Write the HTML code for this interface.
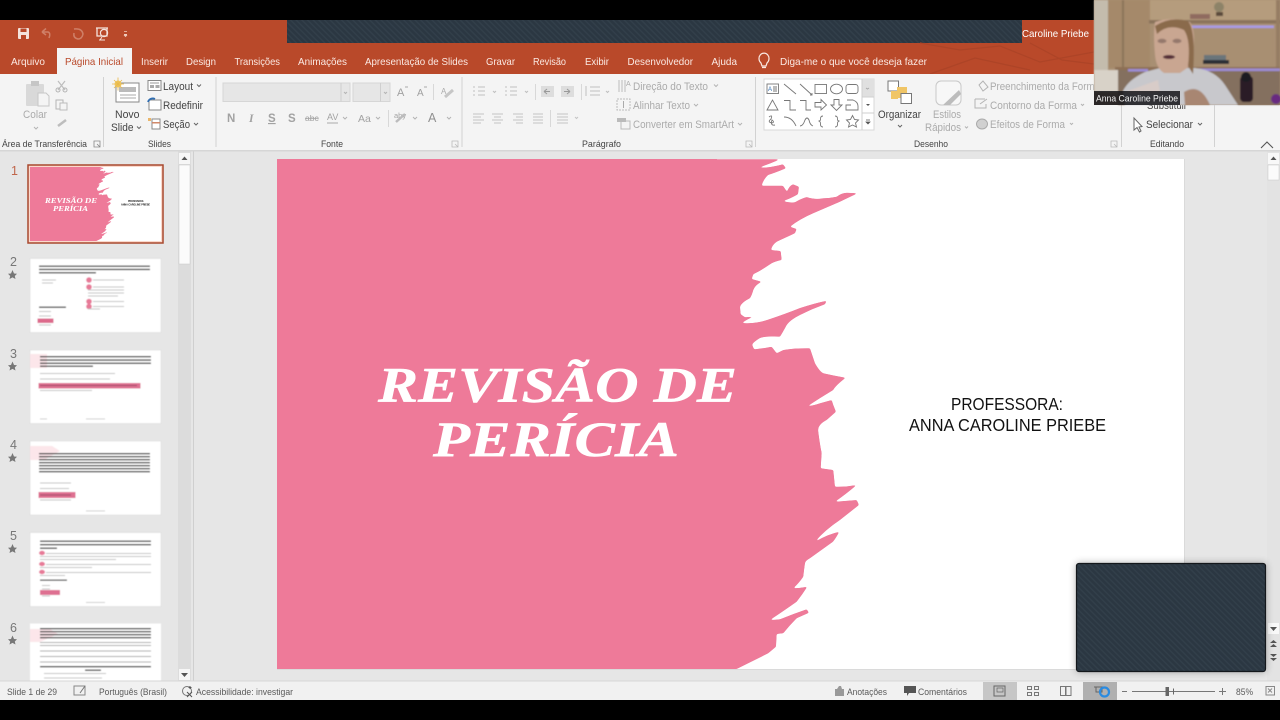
<!DOCTYPE html>
<html><head><meta charset="utf-8"><title>PowerPoint</title>
<style>
html,body{margin:0;padding:0;background:#000;width:1280px;height:720px;overflow:hidden}
svg{display:block;filter:blur(.3px)}
text{font-family:"Liberation Sans",sans-serif}
.t{font-size:10.5px;fill:#fbe9e3}
.b{font-size:10.5px;fill:#444}
.g{font-size:10.5px;fill:#ababab}
.l{font-size:9.5px;fill:#444}
.s{font-size:9.5px;fill:#5a5a5a}
.ic{fill:none;stroke:#666;stroke-width:1}
.id{fill:none;stroke:#b4b4b4;stroke-width:1}
.bar{fill:#333}
.gb{fill:#c4c4c4}
</style></head><body>
<svg width="1280" height="720" viewBox="0 0 1280 720" xmlns="http://www.w3.org/2000/svg">
<defs>
<pattern id="st" width="4" height="4" patternUnits="userSpaceOnUse" patternTransform="rotate(45)">
<rect width="4" height="4" fill="#2b3742"/><rect width="4" height="1.4" fill="#323f4a"/>
</pattern>
<filter id="bl" x="-5%" y="-5%" width="110%" height="110%"><feGaussianBlur stdDeviation="0.45"/></filter>
<filter id="bl2" x="-10%" y="-10%" width="120%" height="120%"><feGaussianBlur stdDeviation="0.9"/></filter>
<filter id="sh" x="-10%" y="-10%" width="120%" height="120%"><feGaussianBlur stdDeviation="4"/></filter>
<filter id="sm" x="-2%" y="-2%" width="104%" height="104%" color-interpolation-filters="sRGB">
<feGaussianBlur stdDeviation="0.9"/>
<feComponentTransfer><feFuncA type="linear" slope="5" intercept="-2"/></feComponentTransfer>
</filter>
<path id="pink" d="M277 159 L780 159.3 Q770 164 758.3 167.7 Q770 168 783 164.3 L786 168.3 Q775 173 768 175 Q763 180 761.7 185.7 L783 185.7 L787 191.7 Q789 186 793 184.3 L799 186.7 L798 194.3 Q790 199 783 201 Q789 203 795 202.3 Q800 199 806.7 197 Q815 200 823 198.3 Q830 198 836.7 196.7 Q841 193 846.7 192.7 L857.7 193.3 Q848 198 840 201.7 L813.3 213.3 Q800 219 790 226.7 L796.7 229 L795 233.3 Q785 238 776.7 241.7 Q772 245 771 250 L780.7 251 L781.7 260 Q776 261 771.7 263.3 Q762 270 753.3 274.3 L751.7 279 L761.7 281.7 Q755 285 753.3 290 Q752 295 750 298.3 Q742 302 740 306.7 L740.7 314.3 L745 317.3 Q756 317 765 313.3 Q752 316 741.7 323 Q755 324 767 320 Q785 314 800 308 Q815 303 826.7 300.7 L825 304.3 Q812 309 800 315 Q790 320 786.7 325 Q783 332 780 336.7 Q765 336 760 338 Q752 343 752.3 345 Q754 350 755 349.3 Q765 348 771.7 346.7 L776.7 353.3 L783.3 350 Q795 348 810 348.3 L815 363.3 Q820 372 823.3 373.3 Q835 376 845.7 377.7 Q835 386 833.3 390 Q820 398 806.7 406.7 Q815 405 820 403.3 L831.7 400 L833.3 405 L836 411.7 L826.7 420 Q817 425 818.3 431.7 Q820 445 821.7 453 L820.7 468.3 L833.3 470 L835 486.7 Q846 487 856.7 485 Q845 495 835 501.7 Q846 501 856.7 500 L859 505 L840 520 Q825 530 815 541.7 Q828 534 839.3 531.7 Q836 538 833 541.7 L810 558.3 Q805 561 805 563.3 Q804 570 803.3 576.7 Q799 583 793.3 588.3 Q800 588 807.3 586.7 Q802 595 796.7 601.7 Q785 610 770 620 Q775 620 780 619.3 Q793 614 806.7 609.3 L809 612.7 L796.7 618.3 Q790 625 783.3 633.3 L776.7 634 L776 646.7 L768.3 653.3 L736.7 669 L277 669 Z"/>
</defs>

<rect width="1280" height="720" fill="#000"/>

<!-- title bar -->
<rect x="0" y="20" width="1280" height="54" fill="#b9492a"/>
<rect x="287" y="20" width="735" height="23" fill="url(#st)"/>
<g fill="none" stroke="#ad4427" stroke-width="1.2">
<path d="M920 43 L960 50 L1000 46 L1040 62 L1094 52"/>
<path d="M930 74 L975 58 L1030 70"/>
<path d="M1030 43 L1062 60 L1094 64"/>
</g>
<!-- QAT -->
<g>
<rect x="18" y="28" width="11" height="11" rx="1" fill="#f4e3dc"/><rect x="20.5" y="28.5" width="6" height="3.5" fill="#b9492a"/><rect x="21" y="35" width="5" height="4" fill="#b9492a"/>
<path d="M42 32 L46 28.5 M42 32 L46 35 M42.5 32 H48 Q51 33 49 38" fill="none" stroke="#cf7f67" stroke-width="1.5"/>
<path d="M74 29 Q82 28 83 34 Q82 39 78 39 Q73 38 74 33" fill="none" stroke="#cf7f67" stroke-width="1.5"/>
<path d="M96 28 H108 M97 28 V36 H107 V28" fill="none" stroke="#f4e3dc" stroke-width="1.3"/><circle cx="104" cy="33" r="3.6" fill="none" stroke="#f4e3dc" stroke-width="1.2"/><path d="M102 37 L100 40 M99 40 H105" stroke="#f4e3dc" stroke-width="1"/>
<rect x="124" y="34" width="3" height="1.4" fill="#f0cdbf"/><path d="M124 31.5 h3 M125.5 36.5 l-1 -1 h2z" stroke="#f0cdbf" stroke-width=".8"/>
</g>
<text x="1022" y="37" class="t" style="fill:#fff" textLength="67" lengthAdjust="spacingAndGlyphs">Caroline Priebe</text>

<!-- tabs -->
<rect x="57" y="48" width="75" height="27" fill="#f4f4f4"/>
<g>
<text x="11" y="65" class="t" textLength="34" lengthAdjust="spacingAndGlyphs">Arquivo</text>
<text x="65" y="65" class="t" style="fill:#b9492a" textLength="58" lengthAdjust="spacingAndGlyphs">Página Inicial</text>
<text x="141" y="65" class="t" textLength="27" lengthAdjust="spacingAndGlyphs">Inserir</text>
<text x="186" y="65" class="t" textLength="30" lengthAdjust="spacingAndGlyphs">Design</text>
<text x="234.500" y="65" class="t" textLength="45.500" lengthAdjust="spacingAndGlyphs">Transições</text>
<text x="298" y="65" class="t" textLength="49" lengthAdjust="spacingAndGlyphs">Animações</text>
<text x="365" y="65" class="t" textLength="103" lengthAdjust="spacingAndGlyphs">Apresentação de Slides</text>
<text x="486" y="65" class="t" textLength="29" lengthAdjust="spacingAndGlyphs">Gravar</text>
<text x="533" y="65" class="t" textLength="33" lengthAdjust="spacingAndGlyphs">Revisão</text>
<text x="585" y="65" class="t" textLength="24" lengthAdjust="spacingAndGlyphs">Exibir</text>
<text x="627.500" y="65" class="t" textLength="65.500" lengthAdjust="spacingAndGlyphs">Desenvolvedor</text>
<text x="711.500" y="65" class="t" textLength="25.500" lengthAdjust="spacingAndGlyphs">Ajuda</text>
<text x="780" y="65" class="t" textLength="147" lengthAdjust="spacingAndGlyphs">Diga-me o que você deseja fazer</text>
<path d="M761 63 A5 5.500 0 1 1 767 63 L766 66 H762 Z M762 67.500 H766" fill="none" stroke="#fbe9e3" stroke-width="1.200"/>
</g>

<!-- ribbon -->
<rect x="0" y="74" width="1280" height="76" fill="#f4f4f4"/>
<rect x="0" y="150" width="1280" height="1.500" fill="#d6d6d6"/>
<g fill="#d2d2d2">
<rect x="103" y="77" width="1" height="70"/><rect x="215.500" y="77" width="1" height="70"/><rect x="461.500" y="77" width="1" height="70"/><rect x="755" y="77" width="1" height="70"/><rect x="1121" y="77" width="1" height="70"/><rect x="1214" y="77" width="1" height="70"/>
</g>
<!-- clipboard -->
<rect x="26" y="84" width="18" height="22" rx="1" fill="#d9d9d9"/><rect x="31" y="81" width="8" height="5" fill="#c6c6c6"/><path d="M38 93 H46 L49 96 V106 H38 Z" fill="#f4f4f4" stroke="#c6c6c6"/>
<path d="M58 81 L65 90 M65 81 L58 90" stroke="#bdbdbd" stroke-width="1.200"/><circle cx="58" cy="90" r="2" class="id"/><circle cx="65" cy="90" r="2" class="id"/>
<rect x="56" y="100" width="7" height="9" class="id"/><rect x="60" y="103" width="7" height="7" fill="#f4f4f4" stroke="#bbb"/>
<path d="M58 126 L66 120" stroke="#bdbdbd" stroke-width="2.500"/>
<text x="23" y="118" class="g" style="font-size:11px" textLength="24" lengthAdjust="spacingAndGlyphs">Colar</text>
<path d="M34 127 l2 2 l2 -2" class="id"/>
<!-- new slide -->
<rect x="116" y="83" width="23" height="19" fill="#fff" stroke="#888"/><rect x="119" y="87" width="17" height="5" fill="#bbb"/><path d="M120 95 H136 M120 98 H136" stroke="#aaa"/>
<circle cx="118" cy="84" r="3.500" fill="#f0c75e"/><path d="M118 77.500 V90.500 M112 84 H124 M114 80 L122 88 M122 80 L114 88" stroke="#e9b94c" stroke-width=".8"/>
<text x="115" y="118" class="b" style="font-size:11px" textLength="24.500" lengthAdjust="spacingAndGlyphs">Novo</text>
<text x="111" y="131" class="b" style="font-size:11px" textLength="22.500" lengthAdjust="spacingAndGlyphs">Slide</text>
<path d="M137 126.500 l2 2 l2 -2" class="ic"/>
<rect x="148" y="80.500" width="13" height="10" fill="#fff" stroke="#888"/><rect x="150" y="85" width="4" height="3" fill="#aaa"/><rect x="155.500" y="85" width="4" height="3" fill="#aaa"/><rect x="150" y="82.500" width="9" height="1" fill="#999"/>
<rect x="149" y="100" width="12" height="10" fill="#fff" stroke="#888"/><path d="M148 102 A5 5 0 0 1 155 99" fill="none" stroke="#2f6db1" stroke-width="1.800"/>
<rect x="152" y="119" width="8" height="10" fill="#fff" stroke="#888"/><rect x="148" y="118" width="3" height="3" fill="#eab66a"/><rect x="152" y="122" width="8" height="1.500" fill="#d0896a"/>
<text x="163" y="90" class="b" style="font-size:11px" textLength="30" lengthAdjust="spacingAndGlyphs">Layout</text><path d="M197 84.500 l2 2 l2 -2" class="ic"/>
<text x="163" y="109" class="b" style="font-size:11px" textLength="40" lengthAdjust="spacingAndGlyphs">Redefinir</text>
<text x="163" y="128" class="b" style="font-size:11px" textLength="27" lengthAdjust="spacingAndGlyphs">Seção</text><path d="M194 123 l2 2 l2 -2" class="ic"/>
<!-- font -->
<rect x="223" y="83" width="127" height="18.500" fill="#e6e6e6" stroke="#d6d6d6"/><rect x="340.500" y="83" width="1" height="18.500" fill="#cfcfcf"/>
<rect x="353" y="83" width="37" height="18.500" fill="#e6e6e6" stroke="#d6d6d6"/><rect x="380" y="83" width="1" height="18.500" fill="#cfcfcf"/>
<path d="M344 92 l1.500 1.500 l1.500 -1.500 M384 92 l1.500 1.500 l1.500 -1.500" class="id"/>
<text x="397" y="96" class="g" style="font-size:11px;fill:#a0a0a0">A</text><text x="417" y="96" class="g" style="font-size:10px;fill:#a0a0a0">A</text>
<path d="M405 87 h3 M424 87 h3" stroke="#aaa"/><rect x="433" y="84" width="1" height="16" fill="#d8d8d8"/>
<text x="441" y="94" class="g" style="font-size:8px">A</text><path d="M445 97 L453 90" stroke="#c6c6c6" stroke-width="3"/>
<text x="227" y="122" class="g" style="font-size:11.500px;font-weight:bold;fill:#a2a2a2">N</text>
<text x="249" y="122" class="g" style="font-size:11.500px;font-style:italic;font-family:'Liberation Serif',serif;fill:#a2a2a2;font-weight:bold">I</text>
<text x="268" y="122" class="g" style="font-size:11.500px;font-weight:bold;text-decoration:underline;fill:#a2a2a2">S</text>
<text x="288" y="122" class="g" style="font-size:11.500px;font-weight:bold;fill:#a2a2a2">S</text>
<text x="305" y="121" class="g" style="font-size:8.500px;text-decoration:line-through;fill:#a2a2a2">abc</text>
<text x="327" y="120" class="g" style="font-size:9px;fill:#a2a2a2">AV</text><path d="M327 123 H338" stroke="#aaa"/>
<path d="M343 117 l2 2 l2 -2 M376 117 l2 2 l2 -2 M413 117 l2 2 l2 -2 M447 117 l2 2 l2 -2" class="id"/>
<text x="358" y="122" class="g" style="font-size:10.500px;fill:#a2a2a2">Aa</text>
<rect x="388" y="110" width="1" height="17" fill="#d8d8d8"/>
<text x="394" y="118" class="g" style="font-size:7.500px;fill:#a2a2a2">aby</text><path d="M396 122 L405 114" stroke="#bcbcbd" stroke-width="2.500"/>
<text x="428" y="122" class="g" style="font-size:12.500px;font-weight:normal;fill:#909090">A</text>
<!-- paragraph -->
<g fill="none" stroke="#c0c0c0">
<path d="M478 87 H485 M478 91 H485 M478 95 H485 M473 87 h2 M473 91 h2 M473 95 h2"/>
<path d="M510 87 H517 M510 91 H517 M510 95 H517 M505 87 h2 M505 91 h2 M505 95 h2"/>
<path d="M493 91 l1.500 1.500 l1.500 -1.500 M525 91 l1.500 1.500 l1.500 -1.500 M606 91 l1.500 1.500 l1.500 -1.500"/>
<path d="M590 87 H600 M590 91 H600 M590 95 H600 M586 86 V96"/>
</g>
<rect x="535" y="84" width="1" height="16" fill="#d8d8d8"/><rect x="581" y="84" width="1" height="16" fill="#d8d8d8"/>
<rect x="541" y="86" width="13" height="11" fill="#ddd"/><rect x="561" y="86" width="13" height="11" fill="#ddd"/>
<path d="M544 91.500 h6 m-6 0 l3 -2.500 m-3 2.500 l3 2.500 M570 91.500 h-6 m6 0 l-3 -2.500 m3 2.500 l-3 2.500" stroke="#999" fill="none"/>
<g stroke="#c4c4c4" fill="none">
<path d="M473 114 H484 M473 117 H481 M473 120 H484 M473 123 H481"/>
<path d="M492 114 H503 M494 117 H501 M492 120 H503 M494 123 H501"/>
<path d="M513 114 H523 M516 117 H523 M513 120 H523 M516 123 H523"/>
<path d="M533 114 H543 M533 117 H543 M533 120 H543 M533 123 H543"/>
<path d="M557 114 H568 M557 117 H568 M557 120 H568 M557 123 H568"/>
<path d="M575 117 l1.500 1.500 l1.500 -1.500"/>
</g>
<rect x="550" y="110" width="1" height="17" fill="#d8d8d8"/>
<path d="M619 80 V92 M622 80 V92 M625 80 V92" stroke="#bbb"/><text x="626" y="86" class="g" style="font-size:7px">A</text>
<rect x="617" y="99" width="13" height="11" fill="none" stroke="#bbb" stroke-dasharray="2 1"/><path d="M623.500 101 V108" stroke="#aaa"/>
<rect x="621" y="121" width="9" height="8" fill="none" stroke="#bbb"/><rect x="617" y="118" width="9" height="4" fill="#bbb"/>
<text x="633" y="90" class="g" style="font-size:11px" textLength="75" lengthAdjust="spacingAndGlyphs">Direção do Texto</text>
<text x="633" y="109" class="g" style="font-size:11px" textLength="57" lengthAdjust="spacingAndGlyphs">Alinhar Texto</text>
<text x="633" y="128" class="g" style="font-size:11px" textLength="101" lengthAdjust="spacingAndGlyphs">Converter em SmartArt</text>
<path d="M714 84.500 l2 2 l2 -2 M694 104 l2 2 l2 -2 M738 123 l2 2 l2 -2" class="id"/>
<!-- gallery -->
<rect x="764" y="79" width="110" height="51" fill="#fff" stroke="#d8d8d8"/>
<rect x="862" y="79" width="12" height="18" fill="#e0e0e0"/><path d="M862 97 H874 M862 113 H874 M862 79 V130" stroke="#cfcfcf"/>
<path d="M866 88 l1.500 1 l1.500 -1" stroke="#aaa" fill="none"/><path d="M866 104 l2 2 l2 -2z" fill="#555"/><path d="M866 120 h4 M866 122 l2 2 l2 -2z" fill="#555" stroke="#555" stroke-width=".7"/>
<g fill="none" stroke="#777" stroke-width=".9">
<rect x="767" y="84" width="11.500" height="9.500"/><path d="M773 87 H777 M773 89 H777 M773 91 H777"/><text x="768" y="91" style="font-size:6px;fill:#2f6db1;stroke:none">A</text>
<path d="M784 84 L796 94"/><path d="M800 84 L812 95"/><path d="M810 95 h2 v-2" />
<rect x="815" y="84.500" width="11.500" height="9"/><ellipse cx="836.500" cy="89" rx="6" ry="4.800"/><rect x="846" y="84.500" width="12" height="9" rx="2.500"/>
<path d="M767 110 L772.500 100 L778 110 Z"/><path d="M784 100.500 H790 V110 H796"/><path d="M800 100.500 H806 V110 H811"/>
<path d="M815 102.500 H821 V99.500 L826.500 105 L821 110 V107 H815 Z"/>
<path d="M834 99.500 H839 V105 H842 L836.500 110.500 L831 105 H834 Z"/><path d="M847 100 H853 Q858 102 858 106 V110 H846 L846 105 H851" />
<path d="M769 117 Q773 114 771 119 Q767 122 772 123 Q775 122 772 120 Q770 126 775 125"/><path d="M784 117 Q792 117 796 126"/><path d="M800 126 Q803 126 805 120 Q807 116 809 120 Q810 125 813 126"/>
<path d="M823 116 Q820 116 820.500 120 Q820 121 818.500 121 Q820 121 820.500 123 Q820 127 823 127"/><path d="M835 116 Q838 116 837.500 120 Q838 121 839.500 121 Q838 121 837.500 123 Q838 127 835 127"/>
<path d="M852.500 115.500 L854.500 119.500 L858.500 120 L855.500 123 L856.500 127 L852.500 125 L848.500 127 L849.500 123 L846.500 120 L850.500 119.500 Z"/>
</g>
<!-- arrange -->
<rect x="888" y="81" width="10.500" height="10" fill="#fff" stroke="#777"/><rect x="897" y="87" width="10" height="11" fill="#f0c566"/><rect x="891" y="91" width="7" height="8" fill="#f0c566"/><rect x="901" y="93.500" width="10.500" height="10" fill="#fff" stroke="#777"/>
<text x="878" y="118" class="b" style="font-size:11px" textLength="43" lengthAdjust="spacingAndGlyphs">Organizar</text><path d="M898 125 l2 2 l2 -2" class="ic"/>
<rect x="936" y="81" width="25" height="24" rx="5" fill="#f7f7f7" stroke="#c8c8c8"/><path d="M943 105 L959 90 L961 94 L950 105 Z" fill="#bcbcbc"/>
<text x="933" y="118" class="g" style="font-size:11px" textLength="28" lengthAdjust="spacingAndGlyphs">Estilos</text>
<text x="925" y="131" class="g" style="font-size:11px" textLength="36" lengthAdjust="spacingAndGlyphs">Rápidos</text><path d="M965 126.500 l1.500 1.500 l1.500 -1.500" class="id"/>
<path d="M979 85 L983 81 L988 87 L983 91 Z" fill="none" stroke="#b4b4b4"/>
<path d="M975 99 H985 M975 99 V108 H986 V104 M980 104 L987 99" fill="none" stroke="#b4b4b4"/>
<ellipse cx="982" cy="124" rx="5.500" ry="5" fill="#d0d0d0" stroke="#aaa"/>
<text x="990" y="90" class="g" style="font-size:11px" textLength="110" lengthAdjust="spacingAndGlyphs">Preenchimento da Forma</text>
<text x="990" y="109" class="g" style="font-size:11px" textLength="87" lengthAdjust="spacingAndGlyphs">Contorno da Forma</text>
<text x="990" y="128" class="g" style="font-size:11px" textLength="75" lengthAdjust="spacingAndGlyphs">Efeitos de Forma</text>
<path d="M1081 104 l1.500 1.500 l1.500 -1.500 M1070 123 l1.500 1.500 l1.500 -1.500" class="id"/>
<text x="1147" y="109" class="b" style="font-size:11px" textLength="40" lengthAdjust="spacingAndGlyphs">Substituir</text>
<text x="1146" y="128" class="b" style="font-size:11px" textLength="47" lengthAdjust="spacingAndGlyphs">Selecionar</text><path d="M1198 123 l2 2 l2 -2" class="ic"/>
<path d="M1134 118 V130 L1137 127.500 L1139.500 132 L1141 131 L1139 127 L1142 126.500 Z" fill="#fff" stroke="#666"/>
<path d="M1261 148 L1267 142 L1273 148" fill="none" stroke="#555" stroke-width="1.100"/>
<!-- group labels -->
<text x="2" y="147" class="l" textLength="85" lengthAdjust="spacingAndGlyphs">Área de Transferência</text>
<text x="148" y="147" class="l" textLength="23" lengthAdjust="spacingAndGlyphs">Slides</text>
<text x="321" y="147" class="l" textLength="22" lengthAdjust="spacingAndGlyphs">Fonte</text>
<text x="582" y="147" class="l" textLength="39" lengthAdjust="spacingAndGlyphs">Parágrafo</text>
<text x="914" y="147" class="l" textLength="34" lengthAdjust="spacingAndGlyphs">Desenho</text>
<text x="1150" y="147" class="l" textLength="34" lengthAdjust="spacingAndGlyphs">Editando</text>
<path d="M94 141 h6 v6 h-6 z M97 144 l3 3" fill="none" stroke="#888" stroke-width=".8"/>
<path d="M452 141 h6 v6 h-6 z M455 144 l3 3 M746 141 h6 v6 h-6 z M749 144 l3 3 M1111 141 h6 v6 h-6 z M1114 144 l3 3" fill="none" stroke="#bbb" stroke-width=".8"/>

<!-- workspace -->
<rect x="0" y="151.500" width="1280" height="529.500" fill="#e6e6e6"/>
<rect x="178" y="151.500" width="13" height="530" fill="#dcdcdc"/>
<rect x="193" y="151.500" width="1" height="530" fill="#cfcfcf"/>
<rect x="179" y="153" width="11" height="11" fill="#f6f6f6"/><path d="M181.500 160 L184.500 156.500 L187.500 160 Z" fill="#555"/>
<rect x="179" y="165" width="11" height="99" fill="#fbfbfb" stroke="#c8c8c8" stroke-width=".5"/>
<rect x="179" y="669" width="11" height="11" fill="#f6f6f6"/><path d="M181 673 H188 L184.500 677 Z" fill="#555"/>
<rect x="1267" y="151.500" width="13" height="530" fill="#e3e3e3"/>
<rect x="1268" y="153" width="11" height="11" fill="#f8f8f8"/><path d="M1270.500 160 L1273.500 156.500 L1276.500 160 Z" fill="#555"/>
<rect x="1268" y="165" width="11" height="15" fill="#fbfbfb" stroke="#c8c8c8" stroke-width=".5"/>
<rect x="1268" y="623" width="11" height="11" fill="#f8f8f8"/><path d="M1270 627 H1277 L1273.500 631 Z" fill="#555"/>
<path d="M1270 643 L1273.500 640 L1277 643 Z M1270 647 L1273.500 644 L1277 647 Z M1270 654 H1277 L1273.500 657 Z M1270 658 H1277 L1273.500 661 Z" fill="#555"/>

<!-- slide -->
<rect x="277" y="159" width="907" height="510" fill="#fff"/>
<rect x="1184" y="159" width="1" height="510" fill="#dadada"/><rect x="277" y="669" width="908" height="1" fill="#dadada"/>
<use href="#pink" fill="#ee7a99" filter="url(#sm)"/>
<rect x="277" y="159" width="440" height="510" fill="#ee7a99"/>
<g fill="#fff" stroke="#fff" stroke-width=".5">
<text x="378" y="401.500" textLength="359" lengthAdjust="spacingAndGlyphs" style="font-family:'Liberation Serif',serif;font-size:50px;font-weight:bold;font-style:italic">REVISÃO DE</text>
<text x="433" y="456" textLength="246" lengthAdjust="spacingAndGlyphs" style="font-family:'Liberation Serif',serif;font-size:50px;font-weight:bold;font-style:italic">PERÍCIA</text>
</g>
<text x="951" y="410" textLength="112" lengthAdjust="spacingAndGlyphs" style="font-size:17.500px;fill:#111">PROFESSORA:</text>
<text x="909" y="431" textLength="197" lengthAdjust="spacingAndGlyphs" style="font-size:17.500px;fill:#111">ANNA CAROLINE PRIEBE</text>

<!-- floating panel -->
<rect x="1076" y="563" width="190" height="109" rx="3" fill="#000" opacity=".3" filter="url(#sh)"/>
<rect x="1076.500" y="563.500" width="189" height="108" rx="2.500" fill="url(#st)" stroke="#14181c" stroke-width="1.200"/>

<!-- thumbs -->
<text x="11" y="175" style="font-size:12.500px;fill:#c0664b">1</text>
<text x="10" y="266" style="font-size:12.500px;fill:#777">2</text><text x="10" y="358" style="font-size:12.500px;fill:#777">3</text><text x="10" y="449" style="font-size:12.500px;fill:#777">4</text><text x="10" y="540" style="font-size:12.500px;fill:#777">5</text><text x="10" y="632" style="font-size:12.500px;fill:#777">6</text>
<g fill="#777">
<path d="M12.500 270 L14 273.500 L17 273.800 L14.800 276 L15.500 279 L12.500 277.400 L9.500 279 L10.200 276 L8 273.800 L11 273.500 Z"/>
<path transform="translate(0,91.500)" d="M12.500 270 L14 273.500 L17 273.800 L14.800 276 L15.500 279 L12.500 277.400 L9.500 279 L10.200 276 L8 273.800 L11 273.500 Z"/>
<path transform="translate(0,183)" d="M12.500 270 L14 273.500 L17 273.800 L14.800 276 L15.500 279 L12.500 277.400 L9.500 279 L10.200 276 L8 273.800 L11 273.500 Z"/>
<path transform="translate(0,274)" d="M12.500 270 L14 273.500 L17 273.800 L14.800 276 L15.500 279 L12.500 277.400 L9.500 279 L10.200 276 L8 273.800 L11 273.500 Z"/>
<path transform="translate(0,365.500)" d="M12.500 270 L14 273.500 L17 273.800 L14.800 276 L15.500 279 L12.500 277.400 L9.500 279 L10.200 276 L8 273.800 L11 273.500 Z"/>
</g>

<rect x="28" y="165" width="135" height="78" fill="#fbd9cc" stroke="#a8492f" stroke-width="1.500"/>
<rect x="30" y="167" width="131" height="74" fill="#fff"/>
<g transform="translate(30,167) scale(.14443,.1451) translate(-277,-159)"><use href="#pink" fill="#ee7a99"/></g>
<text x="45" y="203" textLength="52" lengthAdjust="spacingAndGlyphs" style="font-family:'Liberation Serif',serif;font-size:7.500px;font-weight:bold;font-style:italic;fill:#fff">REVISÃO DE</text>
<text x="53" y="211" textLength="35" lengthAdjust="spacingAndGlyphs" style="font-family:'Liberation Serif',serif;font-size:7.500px;font-weight:bold;font-style:italic;fill:#fff">PERÍCIA</text>
<text x="128" y="202" textLength="16" lengthAdjust="spacingAndGlyphs" style="font-size:2.500px;fill:#111;font-weight:bold">PROFESSORA:</text>
<text x="121" y="205.500" textLength="29" lengthAdjust="spacingAndGlyphs" style="font-size:2.500px;fill:#111;font-weight:bold">ANNA CAROLINE PRIEBE</text>

<g filter="url(#bl)">
<!-- 2 -->
<rect x="30" y="258.500" width="131" height="74" fill="#fff" stroke="#d8d8d8" stroke-width=".5"/>
<rect x="39" y="265.500" width="111" height="1.300" class="bar"/><rect x="39" y="268.800" width="111" height="1.300" class="bar"/><rect x="39" y="272.200" width="57" height="1.300" class="bar"/>
<rect x="42" y="279.500" width="14" height="1" class="gb"/><rect x="42" y="282.500" width="11" height="1" class="gb"/>
<rect x="39" y="306.500" width="27" height="1.300" class="bar"/>
<circle cx="89" cy="280" r="2.800" fill="#e77a98"/><circle cx="89" cy="287" r="2.800" fill="#e77a98"/><circle cx="89" cy="301.500" r="2.800" fill="#e77a98"/><circle cx="89" cy="306.500" r="2.800" fill="#e77a98"/>
<rect x="93" y="279.500" width="31" height="1" class="gb"/><rect x="93" y="286.500" width="31" height="1" class="gb"/><rect x="88" y="289.500" width="36" height="1" class="gb"/><rect x="88" y="292.500" width="36" height="1" class="gb"/><rect x="88" y="295.500" width="30" height="1" class="gb"/><rect x="93" y="301" width="31" height="1" class="gb"/><rect x="93" y="306" width="31" height="1" class="gb"/><rect x="88" y="308.500" width="12" height="1" class="gb"/>
<rect x="39" y="311" width="12" height="1" class="gb"/><rect x="39" y="315.500" width="12" height="1" class="gb"/><rect x="37.500" y="318.500" width="16" height="4.500" fill="#dd6b8c"/><rect x="39" y="324.500" width="12" height="1" class="gb"/>
<!-- 3 -->
<rect x="30" y="350" width="131" height="73.500" fill="#fff" stroke="#d8d8d8" stroke-width=".5"/>
<rect x="30" y="354" width="17" height="14" fill="#fce6ea"/>
<rect x="40" y="356" width="111" height="1.300" class="bar"/><rect x="40" y="359.400" width="111" height="1.300" class="bar"/><rect x="40" y="362.600" width="111" height="1.300" class="bar"/><rect x="40" y="365.500" width="53" height="1.300" class="bar"/>
<rect x="40" y="373" width="75" height="1" class="gb"/><rect x="40" y="378.500" width="70" height="1" class="gb"/>
<rect x="38.500" y="383" width="102" height="5.500" fill="#de7091"/><rect x="40" y="385" width="97" height="1" fill="#a04a66"/>
<rect x="40" y="390" width="52" height="1" class="gb"/>
<rect x="40" y="418.500" width="7" height=".8" class="gb"/><rect x="86" y="418.500" width="19" height=".8" class="gb"/>
<!-- 4 -->
<rect x="30" y="441" width="131" height="74" fill="#fff" stroke="#d8d8d8" stroke-width=".5"/>
<path d="M30 446 H52 L60 451 L44 460 H30 Z" fill="#fce6ea"/>
<rect x="39" y="453" width="111" height="1.300" class="bar"/><rect x="39" y="456" width="111" height="1.300" class="bar"/><rect x="39" y="459" width="111" height="1.300" class="bar"/><rect x="39" y="462" width="111" height="1.300" class="bar"/><rect x="39" y="465" width="111" height="1.300" class="bar"/><rect x="39" y="468" width="111" height="1.300" class="bar"/><rect x="39" y="471" width="111" height="1.300" class="bar"/>
<rect x="40" y="482.500" width="31" height="1" class="gb"/><rect x="40" y="488" width="29" height="1" class="gb"/>
<rect x="38.500" y="492" width="37" height="6" fill="#de7091"/><rect x="40" y="494.500" width="31" height="1" fill="#a04a66"/>
<rect x="40" y="499.500" width="31" height="1" class="gb"/>
<rect x="86" y="510.500" width="19" height=".8" class="gb"/>
<!-- 5 -->
<rect x="30" y="532.500" width="131" height="74" fill="#fff" stroke="#d8d8d8" stroke-width=".5"/>
<rect x="40" y="540.500" width="111" height="1.300" class="bar"/><rect x="40" y="544" width="111" height="1.300" class="bar"/><rect x="40" y="547.500" width="17" height="1.300" class="bar"/>
<ellipse cx="42" cy="553" rx="3" ry="2.200" fill="#e77a98"/><ellipse cx="42" cy="564" rx="3" ry="2.200" fill="#e77a98"/><ellipse cx="42" cy="572" rx="3" ry="2.200" fill="#e77a98"/>
<rect x="46" y="553" width="105" height="1" class="gb"/><rect x="40" y="556" width="111" height="1" class="gb"/><rect x="40" y="559" width="76" height="1" class="gb"/><rect x="46" y="564" width="105" height="1" class="gb"/><rect x="40" y="567" width="52" height="1" class="gb"/><rect x="46" y="572" width="105" height="1" class="gb"/><rect x="40" y="575" width="25" height="1" class="gb"/>
<rect x="40" y="579.500" width="27" height="1.200" class="bar"/><rect x="42" y="585" width="8" height="1" class="gb"/><rect x="42" y="588.500" width="8" height="1" class="gb"/>
<rect x="40" y="590" width="20" height="5" fill="#de7091"/><rect x="42" y="595.500" width="8" height="1" class="gb"/>
<rect x="86" y="602" width="19" height=".8" class="gb"/>
<!-- 6 -->
<rect x="30" y="623.500" width="131" height="58" fill="#fff"/>
<path d="M30 629 H50 L58 634 L40 642 H30 Z" fill="#fce6ea"/>
<rect x="40" y="628" width="111" height="1.300" class="bar"/><rect x="40" y="631" width="111" height="1.300" class="bar"/><rect x="40" y="634" width="111" height="1.300" class="bar"/><rect x="40" y="637" width="111" height="1.300" class="bar"/>
<rect x="40" y="642" width="111" height="1" fill="#aaa"/><rect x="40" y="645" width="111" height="1" fill="#aaa"/><rect x="40" y="650.500" width="111" height="1" fill="#aaa"/><rect x="40" y="656" width="111" height="1" fill="#aaa"/><rect x="40" y="661.500" width="111" height="1" fill="#aaa"/>
<rect x="40" y="666" width="111" height="1.300" class="bar"/><rect x="85" y="669.500" width="16" height="1.300" class="bar"/>
<rect x="44" y="673" width="62" height="1" class="gb"/><rect x="44" y="677.500" width="58" height="1" class="gb"/>
</g>

<!-- status bar -->
<rect x="0" y="681" width="1280" height="19" fill="#f1f1f1"/>
<rect x="0" y="680.500" width="1280" height="1" fill="#d6d6d6"/>
<text x="7" y="695" class="s" textLength="50" lengthAdjust="spacingAndGlyphs">Slide 1 de 29</text>
<path d="M74 686 H85 V695 H74 Z" fill="none" stroke="#888"/><path d="M80 693 L85 686" stroke="#777"/>
<text x="99" y="695" class="s" textLength="68" lengthAdjust="spacingAndGlyphs">Português (Brasil)</text>
<circle cx="187" cy="691" r="4.500" fill="none" stroke="#777"/><path d="M187 692 L192 697 M192 692 L187 697 M190 686 v3 m-1.500 -1.500 h3" stroke="#555"/>
<text x="196" y="695" class="s" textLength="97" lengthAdjust="spacingAndGlyphs">Acessibilidade: investigar</text>
<path d="M835 696 V689 H844 V696 Z M837 689 L839 686 H841 L842 689" fill="#999"/>
<text x="847" y="695" class="s" textLength="40" lengthAdjust="spacingAndGlyphs">Anotações</text>
<path d="M904 686 H916 V693 H909 L907 696 V693 H904 Z" fill="#555"/>
<text x="918" y="695" class="s" textLength="49" lengthAdjust="spacingAndGlyphs">Comentários</text>
<rect x="983" y="682" width="34" height="18" fill="#c6c6c6"/><rect x="994" y="686" width="11" height="10" fill="none" stroke="#666"/><path d="M997 688 h6 v4 h-6z" fill="none" stroke="#666" stroke-width=".7"/>
<path d="M1027.500 686.500 h4 v3 h-4z M1034.500 686.500 h4 v3 h-4z M1027.500 692.500 h4 v3 h-4z M1034.500 692.500 h4 v3 h-4z" fill="none" stroke="#777"/>
<path d="M1060.500 686.500 h5 v9 h-5z M1066 686.500 h5 v9 h-5z" fill="none" stroke="#777"/>
<rect x="1083" y="682" width="34" height="18" fill="#b0b0b0"/><path d="M1094 687 H1104 M1096 687 V692 H1102 V687" fill="none" stroke="#666"/>
<circle cx="1104.500" cy="692" r="4.500" fill="none" stroke="#2a8be0" stroke-width="2.200"/>
<path d="M1122 691.500 H1127 M1132 691.500 H1215 M1219 691.500 H1226 M1222.500 688 V695" stroke="#777"/>
<rect x="1165.500" y="687" width="3.500" height="9" fill="#666"/><rect x="1173" y="688.500" width="1" height="6" fill="#666"/>
<text x="1236" y="695" class="s" textLength="17" lengthAdjust="spacingAndGlyphs">85%</text>
<rect x="1266" y="686.500" width="8.500" height="8.500" fill="none" stroke="#888"/><path d="M1268 688.500 l4 4 M1272 688.500 l-4 4" stroke="#888"/>

<!-- webcam -->
<g>
<rect x="1094" y="0" width="186" height="105" fill="#a88f73"/>
<g filter="url(#bl2)">
<rect x="1094" y="0" width="14" height="70" fill="#c4bcad"/>
<rect x="1094" y="70" width="24" height="22" fill="#d8d2c8"/>
<rect x="1108" y="0" width="42" height="68" fill="#a5896b"/>
<rect x="1122" y="0" width="2" height="68" fill="#8a7259"/>
<rect x="1150" y="0" width="126" height="20" fill="#b59c7d"/>
<rect x="1149" y="20" width="132" height="3.500" fill="#8a735c"/>
<rect x="1190" y="24" width="84" height="42" fill="#a88f72"/>
<rect x="1191" y="25.500" width="83" height="2.500" fill="#a99be8"/>
<rect x="1276" y="0" width="4" height="105" fill="#967d64"/>
<rect x="1115" y="67" width="165" height="3" fill="#8d6f55"/>
<rect x="1118" y="70" width="162" height="35" fill="#84705f"/>
<rect x="1190" y="68.500" width="90" height="2.500" fill="#9d8dd8"/>
<rect x="1128" y="69" width="20" height="2.500" fill="#9d8dd8"/>
<rect x="1204" y="55" width="22" height="6" fill="#6a747a"/><rect x="1203" y="60" width="26" height="4" fill="#2a2e36"/>
<circle cx="1219" cy="7" r="5" fill="#8d8368"/><rect x="1216" y="12" width="7" height="4" fill="#5a4a3a"/>
<rect x="1190" y="14" width="20" height="5" fill="#8f6a5e"/>
<rect x="1240" y="76" width="13" height="26" rx="4" fill="#2a1f26"/><circle cx="1246" cy="77" r="5" fill="#1d1a24"/>
<circle cx="1276" cy="99" r="5" fill="#682a80"/>
<!-- person -->
<path d="M1123 91 Q1128 80 1145 72 L1160 68 H1195 Q1215 70 1225 85 L1238 105 H1125 Z" fill="#c8c8cc"/>
<path d="M1155 22 Q1172 16 1190 22 Q1196 32 1193 50 L1190 66 L1180 73 H1164 Q1156 68 1155 55 Q1153 35 1155 22 Z" fill="#c9a691"/>
<path d="M1155 26 Q1170 16 1188 21 Q1196 30 1193 74 L1188 66 Q1191 40 1184 30 Q1168 23 1157 34 Z" fill="#8a6a4c"/>
<ellipse cx="1169" cy="57" rx="6" ry="2" fill="#552f38"/>
<ellipse cx="1162" cy="41" rx="4.500" ry="2.200" fill="#94786c"/><ellipse cx="1177" cy="41" rx="4.500" ry="2.200" fill="#94786c"/>
<path d="M1184 92 Q1200 82 1210 105 H1185 Z" fill="#a88672"/>
<path d="M1125 92 L1158 80 L1160 92 L1135 94 Z" fill="#d8ccc8"/>
</g>
<rect x="1094" y="91" width="86" height="14" fill="#15151a" opacity=".85"/>
<text x="1096" y="101.500" textLength="82" lengthAdjust="spacingAndGlyphs" style="font-size:9.500px;fill:#f4f4f4">Anna Caroline Priebe</text>
</g>
</svg>
</body></html>
